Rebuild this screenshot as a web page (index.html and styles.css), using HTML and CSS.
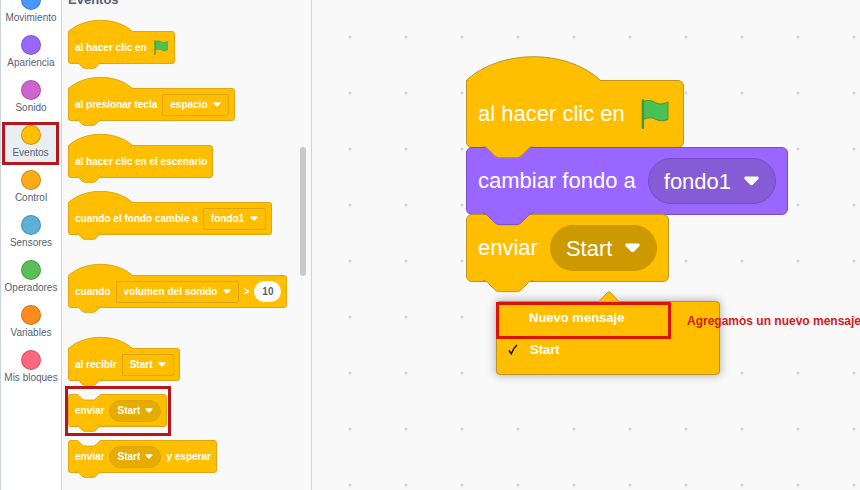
FILE: index.html
```html
<!DOCTYPE html>
<html lang="es">
<head>
<meta charset="utf-8">
<title>Editor de bloques</title>
<link rel="stylesheet" href="styles.css">
</head>
<body>
<svg class="defs" aria-hidden="true">
  <symbol id="hat" viewBox="0 0 98 18">
    <path class="fill" d="M.7 18V17c25-22 71-22 95.500 0V18z"/>
    <path class="line" d="M.4 18V17c25-22 71-22 95.500 0"/>
  </symbol>
  <symbol id="bump" viewBox="0 0 60 10">
    <path class="fill" d="M12 -1.500V-.4c2 0 3 1 4 2l4 4c1 1 2 2 4 2h12c2 0 3-1 4-2l4-4c1-1 2-2 4-2V-1.500z"/>
    <path class="line" d="M12-.4c2 0 3 1 4 2l4 4c1 1 2 2 4 2h12c2 0 3-1 4-2l4-4c1-1 2-2 4-2"/>
  </symbol>
  <symbol id="notch" viewBox="0 0 60 10">
    <path class="fill" d="M12 -1V.7c2 0 3 1 4 2l4 4c1 1 2 2 4 2h12c2 0 3-1 4-2l4-4c1-1 2-2 4-2V-1z"/>
    <path class="line" d="M12 .7c2 0 3 1 4 2l4 4c1 1 2 2 4 2h12c2 0 3-1 4-2l4-4c1-1 2-2 4-2"/>
  </symbol>
  <symbol id="arrow" viewBox="0 0 15 10">
    <path d="M2 .5h11c1.700 0 2.200 1.600 1.200 2.700L9 8.600c-.9.9-2.100.9-3 0L.8 3.200C-.2 2.100.3.5 2 .5z" fill="#fff"/>
  </symbol>
  <symbol id="flag" viewBox="0 0 27 29">
    <path d="M2.500 2.500c7-3 10 .5 13 1.700 4 1.500 7 .3 10.500-1.200v16.500c-4 2-7 2-10.500.5-4-1.700-7-3-13-.5z" fill="#4cbf56" stroke="#45993d" stroke-linejoin="round"/>
    <path d="M1.800 1.300v26.400" stroke="#45993d" stroke-width="2.400" stroke-linecap="round"/>
  </symbol>
</svg>

<main class="editor">
  <nav class="categories" aria-label="Categorías">
    <button class="category"><i class="dot motion"></i>Movimiento</button>
    <button class="category"><i class="dot looks"></i>Apariencia</button>
    <button class="category"><i class="dot sound"></i>Sonido</button>
    <button class="category selected"><i class="dot events"></i>Eventos</button>
    <button class="category"><i class="dot control"></i>Control</button>
    <button class="category"><i class="dot sensing"></i>Sensores</button>
    <button class="category"><i class="dot operators"></i>Operadores</button>
    <button class="category"><i class="dot variables"></i>Variables</button>
    <button class="category"><i class="dot custom"></i>Mis bloques</button>
  </nav>

  <section class="palette">
    <h2>Eventos</h2>
    <div class="block">
      <svg class="hat"><use href="#hat"/></svg>
      <span>al hacer clic en</span><svg class="flag"><use href="#flag"/></svg>
      <svg class="bump"><use href="#bump"/></svg>
    </div>
    <div class="block">
      <svg class="hat"><use href="#hat"/></svg>
      <label for="key">al presionar tecla</label>
      <span class="field"><select id="key"><option>espacio</option></select><svg class="arrow"><use href="#arrow"/></svg></span>
      <svg class="bump"><use href="#bump"/></svg>
    </div>
    <div class="block">
      <svg class="hat"><use href="#hat"/></svg>
      <span>al hacer clic en el escenario</span>
      <svg class="bump"><use href="#bump"/></svg>
    </div>
    <div class="block">
      <svg class="hat"><use href="#hat"/></svg>
      <label for="backdrop">cuando el fondo cambie a</label>
      <span class="field"><select id="backdrop"><option>fondo1</option></select><svg class="arrow"><use href="#arrow"/></svg></span>
      <svg class="bump"><use href="#bump"/></svg>
    </div>
    <div class="block spaced">
      <svg class="hat"><use href="#hat"/></svg>
      <label for="sensor">cuando</label>
      <span class="field"><select id="sensor"><option>volumen del sonido</option></select><svg class="arrow"><use href="#arrow"/></svg></span>
      <label for="level">&gt;</label>
      <input class="number" id="level" type="text" value="10">
      <svg class="bump"><use href="#bump"/></svg>
    </div>
    <div class="block spaced">
      <svg class="hat"><use href="#hat"/></svg>
      <label for="receive">al recibir</label>
      <span class="field"><select id="receive"><option>Start</option></select><svg class="arrow"><use href="#arrow"/></svg></span>
      <svg class="bump"><use href="#bump"/></svg>
    </div>
    <div class="block close marked">
      <svg class="notch"><use href="#notch"/></svg>
      <label for="send">enviar</label>
      <span class="field round"><select id="send"><option>Start</option></select><svg class="arrow"><use href="#arrow"/></svg></span>
      <svg class="bump"><use href="#bump"/></svg>
    </div>
    <div class="block close">
      <svg class="notch"><use href="#notch"/></svg>
      <label for="wait">enviar</label>
      <span class="field round"><select id="wait"><option>Start</option></select><svg class="arrow"><use href="#arrow"/></svg></span>
      <span>y esperar</span>
      <svg class="bump"><use href="#bump"/></svg>
    </div>
    <div class="scrollbar"></div>
  </section>

  <section class="workspace">
    <div class="stack">
      <div class="block">
        <svg class="hat"><use href="#hat"/></svg>
        <span>al hacer clic en</span><svg class="flag"><use href="#flag"/></svg>
        <svg class="bump"><use href="#bump"/></svg>
      </div>
      <div class="block purple">
        <label for="scene">cambiar fondo a</label>
        <span class="field round"><select id="scene"><option>fondo1</option></select><svg class="arrow"><use href="#arrow"/></svg></span>
        <svg class="bump"><use href="#bump"/></svg>
      </div>
      <div class="block">
        <label for="message">enviar</label>
        <span class="field round open"><select id="message"><option>Start</option></select><svg class="arrow"><use href="#arrow"/></svg></span>
        <svg class="bump"><use href="#bump"/></svg>
      </div>
    </div>
    <div class="menu">
      <svg class="tip" viewBox="0 0 22 11"><path d="M1 10.500L9.500 1.500q1.500-1.500 3 0L21 10.500" /></svg>
      <button class="item new">Nuevo mensaje</button>
      <button class="item"><svg class="check" viewBox="0 0 10 11"><path d="M1 6.500l2.300 3.200C4.600 6 6.300 3.300 9 1" /></svg>Start</button>
      <p class="note">Agregamos un nuevo mensaje</p>
    </div>
  </section>
</main>
</body>
</html>
```
FILE: styles.css
```css
* { box-sizing: border-box; }

body {
  margin: 0;
  font-family: "Liberation Sans", Arial, sans-serif;
  background: #f9f9f9;
  color: #575e75;
}

button, select, input {
  margin: 0;
  border: 0;
  padding: 0;
  background: none;
  color: inherit;
  font: inherit;
}

.defs { position: absolute; width: 0; height: 0; }

.editor {
  display: flex;
  height: 100vh;
  overflow: hidden;
}

/* Category column */
.categories {
  display: flex;
  flex-direction: column;
  gap: 2px;
  flex: 0 0 62px;
  margin-top: -13px;
  border: 1px solid #cdd3dd;
  border-width: 0 1px;
  background: #fff;
}

.category {
  display: flex;
  flex-direction: column;
  align-items: center;
  gap: 1px;
  flex: 0 0 43px;
  padding-top: 3px;
  font-size: 10px;
  line-height: 14px;
  white-space: nowrap;
}

.selected {
  margin: 0 2px 0 1px;
  border: 3px solid #b5171b;
  padding-top: 0;
  background: #e9eef2;
}

.dot {
  flex: none;
  width: 20px;
  height: 20px;
  border: 1px solid #0003;
  border-radius: 50%;
}

.motion { background: #4c97ff; }
.looks { background: #9966ff; }
.sound { background: #cf63cf; }
.events { background: #ffbf00; }
.control { background: #ffab19; }
.sensing { background: #5cb1d6; }
.operators { background: #59c059; }
.variables { background: #ff8c1a; }
.custom { background: #ff6680; }

/* Palette */
.palette {
  --edge: #dfa613;
  position: relative;
  display: flex;
  flex-direction: column;
  align-items: flex-start;
  flex: 0 0 250px;
  padding-left: 6px;
  border-right: 1px solid #d3d3d3;
  font-size: 10px;
  font-weight: bold;
}

.palette h2 {
  margin: -8px 0 -1px;
  font-size: 13px;
  line-height: 16px;
}

.scrollbar {
  position: absolute;
  top: 147px;
  right: 5px;
  width: 6px;
  height: 129px;
  border-radius: 3px;
  background: #c9c9c9;
}

/* Blocks */
.block {
  --fill: #ffbf00;
  position: relative;
  display: flex;
  align-items: center;
  flex: none;
  gap: 5px;
  height: 33px;
  margin-top: 24px;
  border: 1px solid var(--edge);
  border-radius: 3px;
  padding: 0 5px 0 6px;
  background: var(--fill);
  color: #fff;
  white-space: nowrap;
}

.spaced { margin-top: 40px; }
.close { margin-top: 13px; }

.hat, .bump, .notch {
  position: absolute;
  left: -1px;
  overflow: visible;
}

.hat { bottom: 100%; width: 66px; height: 12px; }
.bump { top: 100%; width: 42px; height: 7px; }
.notch { top: -1px; width: 42px; height: 7px; }

.fill { fill: var(--fill); }
.line { fill: none; stroke: var(--edge); vector-effect: non-scaling-stroke; }
.notch { --fill: #f9f9f9; }

symbol { overflow: visible; }

.block:has(.hat) { border-top-left-radius: 0; }

.flag { width: 14px; height: 15px; margin: 0 1px 0 2px; }

.field {
  position: relative;
  display: flex;
  align-items: center;
}

.field select {
  height: 22px;
  border: 1px solid var(--edge);
  border-radius: 2px;
  padding: 0 20px 0 7px;
  appearance: none;
}

.field .arrow {
  position: absolute;
  right: 8px;
  width: 8px;
  height: 5px;
  pointer-events: none;
}

.field.round select {
  border-radius: 24px;
  background: #e6ac00;
}

.number {
  width: 27px;
  height: 21px;
  border-radius: 11px;
  background: #fff;
  color: #575e75;
  text-align: center;
}

.marked::before {
  content: "";
  position: absolute;
  inset: -9px -5px -10px -4px;
  border: 3px solid #b5171b;
}

/* Workspace */
.workspace {
  --edge: #bd9420;
  position: relative;
  flex: 1;
  min-width: 0;
  overflow: hidden;
  background: radial-gradient(circle, #d6d6d6 1px, transparent 2px) 10px 9px / 56px 56px;
}

.stack {
  position: absolute;
  left: 154px;
  top: 81px;
  display: flex;
  flex-direction: column;
  align-items: flex-start;
  font-size: 22px;
}

.stack .block {
  gap: 12px;
  height: 68px;
  margin-top: -1px;
  border-radius: 6px;
  padding: 0 11px;
}

.stack .block:has(.hat) { border-top-left-radius: 0; }
.stack .purple { --fill: #9966ff; --edge: #774dcb; }
.stack .hat { width: 137px; height: 25px; }
.stack .bump { z-index: 1; width: 84px; height: 14px; }
.stack .flag { width: 28px; height: 30px; margin: 0 3px 0 4px; }

.stack .field select {
  height: 46px;
  padding: 0 43px 0 15px;
}

.stack .purple select { background: #855cd6; }
.stack .open select { border-color: #cc9900; background: #cc9900; }
.stack .arrow { right: 17px; width: 15px; height: 10px; }

/* Message menu */
.menu {
  position: absolute;
  left: 184px;
  top: 301px;
  width: 224px;
  height: 74px;
  border: 1px solid #bd9420;
  border-radius: 4px;
  background: #ffbf00;
  box-shadow: 0 0 8px 1px #0004;
  color: #fff;
  font-size: 13px;
  font-weight: bold;
}

.tip {
  position: absolute;
  left: 101px;
  bottom: 100%;
  width: 22px;
  height: 11px;
  fill: #ffbf00;
  stroke: #bd9420;
}

.item {
  display: flex;
  align-items: center;
  width: 100%;
  height: 20px;
  padding-left: 33px;
}

.new {
  width: 175px;
  height: 37px;
  margin-left: -1px;
  border: 3px solid #dc1405;
  padding: 0 0 6px 30px;
}

.check {
  width: 10px;
  height: 11px;
  margin: 0 12px 0 -22px;
  fill: none;
  stroke: #111;
  stroke-width: 1.5;
}

.note {
  position: absolute;
  left: 190px;
  top: 11px;
  margin: 0;
  color: #d0201c;
  font-size: 12px;
  line-height: 16px;
  white-space: nowrap;
}
```
